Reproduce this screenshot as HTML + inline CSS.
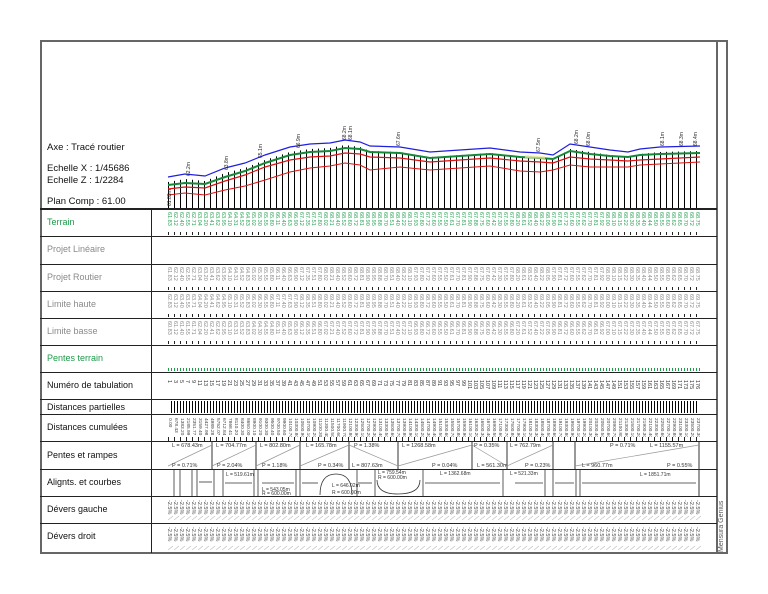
<!DOCTYPE html>
<html><head><meta charset="utf-8"><style>
*{margin:0;padding:0;box-sizing:border-box}
body{width:768px;height:594px;background:#fff;position:relative;overflow:hidden;font-family:"Liberation Sans",Arial,sans-serif}
.a{position:absolute}
.lb{position:absolute;left:47px;font-size:9px;color:#111;white-space:nowrap}
.g{color:#1e9a4a}.gr{color:#8a8a8a}
.h{position:absolute;left:47px;font-size:9.5px;color:#111;white-space:nowrap}
.v{position:absolute;writing-mode:vertical-lr;font-size:5.5px;line-height:6px;color:#8a8a8a;overflow:hidden;word-spacing:14px;letter-spacing:0}
.hl{position:absolute;left:40px;width:677px;height:1px;background:#222}
</style></head><body>
<div class="a" style="left:40px;top:40px;width:688px;height:514px;border:2px solid #666"></div>
<div class="a" style="left:716px;top:40px;width:2px;height:514px;background:#666"></div>
<div class="a" style="left:718px;top:490px;width:9px;height:62px;font-size:7px;color:#555;writing-mode:vertical-rl;transform:rotate(180deg);white-space:nowrap">Mensura Genius</div>

<div class="h" style="top:142px">Axe : Tracé routier</div>
<div class="h" style="top:163px">Echelle X : 1/45686</div>
<div class="h" style="top:175px">Echelle Z : 1/2284</div>
<div class="h" style="top:196px">Plan Comp : 61.00</div>

<div class="hl" style="top:208px;height:2px"></div>
<div class="hl" style="top:236px"></div>
<div class="hl" style="top:264px"></div>
<div class="hl" style="top:291px"></div>
<div class="hl" style="top:318px"></div>
<div class="hl" style="top:345px"></div>
<div class="hl" style="top:372px"></div>
<div class="hl" style="top:399px"></div>
<div class="hl" style="top:414px"></div>
<div class="hl" style="top:441px"></div>
<div class="hl" style="top:469px"></div>
<div class="hl" style="top:496px"></div>
<div class="hl" style="top:523px"></div>
<div class="a" style="left:151px;top:208px;width:1px;height:345px;background:#222"></div>

<div class="lb g" style="top:217px">Terrain</div>
<div class="lb gr" style="top:244px">Projet Linéaire</div>
<div class="lb gr" style="top:272px">Projet Routier</div>
<div class="lb gr" style="top:299px">Limite haute</div>
<div class="lb gr" style="top:326px">Limite basse</div>
<div class="lb g" style="top:353px">Pentes terrain</div>
<div class="lb" style="top:380px">Numéro de tabulation</div>
<div class="lb" style="top:402px">Distances partielles</div>
<div class="lb" style="top:422px">Distances cumulées</div>
<div class="lb" style="top:450px">Pentes et rampes</div>
<div class="lb" style="top:477px">Alignts. et courbes</div>
<div class="lb" style="top:504px">Dévers gauche</div>
<div class="lb" style="top:531px">Dévers droit</div>

<div class="v" style="left:166px;top:212px;width:536px;height:20px;color:#2aa356">61.83 62.12 62.40 62.55 62.71 63.04 63.20 63.41 63.62 63.95 64.10 64.31 64.52 64.83 65.02 65.30 65.55 65.80 66.11 66.40 66.63 66.90 67.12 67.35 67.51 67.80 68.02 68.21 68.40 68.52 68.60 68.72 68.81 68.90 68.95 68.88 68.70 68.51 68.40 68.22 68.10 67.93 67.80 67.72 67.60 67.55 67.50 67.61 67.70 67.81 67.90 67.88 67.75 67.60 67.42 67.30 67.55 67.80 68.20 68.61 68.52 68.40 68.22 68.05 67.90 67.81 67.72 67.60 67.55 67.62 67.70 67.81 67.92 68.00 68.10 68.15 68.22 68.30 68.35 68.40 68.44 68.50 68.55 68.60 68.62 68.65 68.70 68.72 68.75 68.80 68.81 68.85 68.90 68.92 68.95 68.97 69.00</div>
<div class="v" style="left:166px;top:267px;width:536px;height:20px">61.83 62.12 62.40 62.55 62.71 63.04 63.20 63.41 63.62 63.95 64.10 64.31 64.52 64.83 65.02 65.30 65.55 65.80 66.11 66.40 66.63 66.90 67.12 67.35 67.51 67.80 68.02 68.21 68.40 68.52 68.60 68.72 68.81 68.90 68.95 68.88 68.70 68.51 68.40 68.22 68.10 67.93 67.80 67.72 67.60 67.55 67.50 67.61 67.70 67.81 67.90 67.88 67.75 67.60 67.42 67.30 67.55 67.80 68.20 68.61 68.52 68.40 68.22 68.05 67.90 67.81 67.72 67.60 67.55 67.62 67.70 67.81 67.92 68.00 68.10 68.15 68.22 68.30 68.35 68.40 68.44 68.50 68.55 68.60 68.62 68.65 68.70 68.72 68.75 68.80 68.81 68.85 68.90 68.92 68.95 68.97 69.00</div>
<div class="v" style="left:166px;top:294px;width:536px;height:20px">62.83 63.12 63.40 63.55 63.71 64.04 64.20 64.41 64.62 64.95 65.10 65.31 65.52 65.83 66.02 66.30 66.55 66.80 67.11 67.40 67.63 67.90 68.12 68.35 68.51 68.80 69.02 69.21 69.40 69.52 69.60 69.72 69.81 69.90 69.95 69.88 69.70 69.51 69.40 69.22 69.10 68.93 68.80 68.72 68.60 68.55 68.50 68.61 68.70 68.81 68.90 68.88 68.75 68.60 68.42 68.30 68.55 68.80 69.20 69.61 69.52 69.40 69.22 69.05 68.90 68.81 68.72 68.60 68.55 68.62 68.70 68.81 68.92 69.00 69.10 69.15 69.22 69.30 69.35 69.40 69.44 69.50 69.55 69.60 69.62 69.65 69.70 69.72 69.75 69.80 69.81 69.85 69.90 69.92 69.95</div>
<div class="v" style="left:166px;top:321px;width:536px;height:20px">60.83 61.12 61.40 61.55 61.71 62.04 62.20 62.41 62.62 62.95 63.10 63.31 63.52 63.83 64.02 64.30 64.55 64.80 65.11 65.40 65.63 65.90 66.12 66.35 66.51 66.80 67.02 67.21 67.40 67.52 67.60 67.72 67.81 67.90 67.95 67.88 67.70 67.51 67.40 67.22 67.10 66.93 66.80 66.72 66.60 66.55 66.50 66.61 66.70 66.81 66.90 66.88 66.75 66.60 66.42 66.30 66.55 66.80 67.20 67.61 67.52 67.40 67.22 67.05 66.90 66.81 66.72 66.60 66.55 66.62 66.70 66.81 66.92 67.00 67.10 67.15 67.22 67.30 67.35 67.40 67.44 67.50 67.55 67.60 67.62 67.65 67.70 67.72 67.75 67.80 67.81 67.85 67.90 67.92 67.95</div>
<div class="v" style="left:166px;top:380px;width:536px;height:15px;color:#333;word-spacing:20px">1 3 5 7 9 11 13 15 17 19 21 23 25 27 29 31 33 35 37 39 41 43 45 47 49 51 53 55 57 59 61 63 65 67 69 71 73 75 77 79 81 83 85 87 89 91 93 95 97 99 101 103 105 107 109 111 113 115 117 119 121 123 125 127 129 131 133 135 137 139 141 143 145 147 149 151 153 155 157 159 161 163 165 167 169 171 173 175 176</div>
<div class="v" style="left:166px;top:418px;width:536px;height:19px;color:#444;font-size:4.8px;word-spacing:20px">0.00 678.43 1383.20 2185.99 2351.77 3159.40 4427.98 4989.28 5752.07 6712.84 7868.41 8110.20 8400.30 8650.00 8900.10 9100.20 9300.30 9500.40 9700.50 9900.60 10100.70 10300.80 10500.90 10700.10 10900.20 11100.30 11300.40 11500.50 11700.60 11900.70 12100.80 12300.90 12500.10 12700.20 12900.30 13100.40 13300.50 13500.60 13700.70 13900.80 14100.90 14300.10 14500.20 14700.30 14900.40 15100.50 15300.60 15500.70 15700.80 15900.90 16100.10 16300.20 16500.30 16700.40 16900.50 17100.60 17300.70 17500.80 17700.90 17900.10 18100.20 18300.30 18500.40 18700.50 18900.60 19100.70 19300.80 19500.90 19700.10 19900.20 20100.30 20300.40 20500.50 20700.60 20900.70 21100.80 21300.90 21500.10 21700.20 21900.30 22100.40 22300.50 22500.60 22700.70 22900.80 23100.90 23300.10 23500.20 23700.30 23900.40</div>
<div class="v" style="left:166px;top:500px;width:536px;height:20px;color:#444;font-size:5.5px;word-spacing:30px">-2.5% -2.5% -2.5% -2.5% -2.5% -2.5% -2.5% -2.5% -2.5% -2.5% -2.5% -2.5% -2.5% -2.5% -2.5% -2.5% -2.5% -2.5% -2.5% -2.5% -2.5% -2.5% -2.5% -2.5% -2.5% -2.5% -2.5% -2.5% -2.5% -2.5% -2.5% -2.5% -2.5% -2.5% -2.5% -2.5% -2.5% -2.5% -2.5% -2.5% -2.5% -2.5% -2.5% -2.5% -2.5% -2.5% -2.5% -2.5% -2.5% -2.5% -2.5% -2.5% -2.5% -2.5% -2.5% -2.5% -2.5% -2.5% -2.5% -2.5% -2.5% -2.5% -2.5% -2.5% -2.5% -2.5% -2.5% -2.5% -2.5% -2.5% -2.5% -2.5% -2.5% -2.5% -2.5% -2.5% -2.5% -2.5% -2.5% -2.5% -2.5% -2.5% -2.5% -2.5% -2.5% -2.5% -2.5% -2.5% -2.5%</div>
<div class="v" style="left:166px;top:527px;width:536px;height:20px;color:#444;font-size:5.5px;word-spacing:30px">-2.5% -2.5% -2.5% -2.5% -2.5% -2.5% -2.5% -2.5% -2.5% -2.5% -2.5% -2.5% -2.5% -2.5% -2.5% -2.5% -2.5% -2.5% -2.5% -2.5% -2.5% -2.5% -2.5% -2.5% -2.5% -2.5% -2.5% -2.5% -2.5% -2.5% -2.5% -2.5% -2.5% -2.5% -2.5% -2.5% -2.5% -2.5% -2.5% -2.5% -2.5% -2.5% -2.5% -2.5% -2.5% -2.5% -2.5% -2.5% -2.5% -2.5% -2.5% -2.5% -2.5% -2.5% -2.5% -2.5% -2.5% -2.5% -2.5% -2.5% -2.5% -2.5% -2.5% -2.5% -2.5% -2.5% -2.5% -2.5% -2.5% -2.5% -2.5% -2.5% -2.5% -2.5% -2.5% -2.5% -2.5% -2.5% -2.5% -2.5% -2.5% -2.5% -2.5% -2.5% -2.5% -2.5% -2.5% -2.5% -2.5%</div>

<svg class="a" style="left:0;top:0" width="768" height="594" viewBox="0 0 768 594">
<defs>
<pattern id="vl" x="168" y="0" width="6" height="10" patternUnits="userSpaceOnUse"><rect x="0" y="0" width="1" height="10" fill="#000"/></pattern>
<pattern id="dp" x="171" y="0" width="3" height="10" patternUnits="userSpaceOnUse"><rect x="0" y="0" width="1" height="10" fill="#000"/></pattern>
<pattern id="tk" x="168" y="0" width="6" height="10" patternUnits="userSpaceOnUse"><rect x="0" y="0" width="1" height="10" fill="#222"/></pattern>
<pattern id="tg" x="168" y="0" width="3" height="10" patternUnits="userSpaceOnUse"><rect x="0" y="0" width="1" height="10" fill="#1e9a4a"/></pattern>
<pattern id="ts" x="168" y="0" width="6" height="10" patternUnits="userSpaceOnUse"><line x1="0" y1="10" x2="5" y2="6" stroke="#bbb" stroke-width="0.6"/></pattern>
</defs>
<polygon fill="url(#vl)" points="168,182 185,179 205,181 225,173 245,168 265,160 290,152 310,149 330,148 345,145 360,147 370,151 400,152 430,157 460,155 490,153 520,157 540,158 553,160 570,149 590,152 610,155 628,157 640,154 660,152 701,151 701,208 168,208"/>
<polyline fill="none" stroke="#1f1fe0" stroke-width="1.2" points="168,177 185,174 205,176 225,168 245,163 265,155 290,147 310,144 330,143 345,140 360,142 370,146 400,147 430,152 460,150 490,148 520,152 540,153 553,155 570,144 590,147 610,150 628,152 640,149 660,147 700,146"/>
<polyline fill="none" stroke="#138a3a" stroke-width="2" points="168,185 185,183 205,184 225,177 245,171 265,163 290,155 310,152 330,151 345,148 360,149 370,152 400,153 430,158 460,156 490,154 520,157 540,158 553,159 570,151 590,154 610,156 628,157 640,155 660,154 700,153"/>
<polyline fill="none" stroke="#e01010" stroke-width="1.2" points="168,189 185,187 205,188 225,181 245,175 265,167 290,160 310,157 330,156 345,153 360,154 370,157 400,158 430,162 460,160 490,158 520,161 540,162 553,163 570,157 590,159 610,160 628,161 640,160 660,159 700,157"/>
<polyline fill="none" stroke="#e01010" stroke-width="1" points="168,195 185,193 205,195 225,190 245,186 265,180 290,172 310,168 330,166 345,163 360,165 370,170 400,167 430,170 460,168 490,166 520,171 540,172 553,170 570,165 590,167 610,167 628,167 640,165 660,164 700,162"/>
<polygon fill="#f3ea9a" opacity=".7" points="525,155 545,156 545,159 525,158"/>
<rect x="168" y="232" width="533" height="3" fill="url(#tk)"/>
<rect x="168" y="287" width="533" height="3" fill="url(#tk)"/>
<rect x="168" y="314" width="533" height="3" fill="url(#tk)"/>
<rect x="168" y="341" width="533" height="3" fill="url(#tk)"/>
<rect x="168" y="368" width="533" height="3" fill="url(#tg)"/>
<rect x="168" y="390" width="533" height="6" fill="url(#ts)"/>
<rect x="171" y="401" width="528" height="12" fill="url(#dp)"/>
<rect x="168" y="437" width="533" height="4" fill="url(#tk)"/>
<rect x="168" y="542" width="533" height="8" fill="url(#ts)"/>
<rect x="168" y="515" width="533" height="6" fill="url(#ts)"/>
<g stroke="#333" stroke-width="1">
<line x1="212" y1="441" x2="212" y2="469"/><line x1="256" y1="441" x2="256" y2="469"/>
<line x1="300" y1="441" x2="300" y2="469"/><line x1="349" y1="441" x2="349" y2="469"/>
<line x1="398" y1="441" x2="398" y2="469"/><line x1="472" y1="441" x2="472" y2="469"/>
<line x1="507" y1="441" x2="507" y2="469"/><line x1="553" y1="441" x2="553" y2="469"/>
<line x1="575" y1="441" x2="575" y2="469"/><line x1="699" y1="441" x2="699" y2="496"/>
</g>
<g stroke="#999" stroke-width=".7">
<line x1="168" y1="466" x2="212" y2="445"/><line x1="212" y1="466" x2="256" y2="445"/>
<line x1="256" y1="466" x2="300" y2="445"/><line x1="300" y1="466" x2="349" y2="445"/>
<line x1="349" y1="445" x2="398" y2="466"/><line x1="398" y1="466" x2="472" y2="445"/>
<line x1="472" y1="445" x2="507" y2="466"/><line x1="507" y1="466" x2="553" y2="445"/>
<line x1="575" y1="466" x2="699" y2="445"/>
</g>
<g font-size="5.5" fill="#333" font-family="Liberation Sans">
<text x="172" y="447">L = 678.43m</text><text x="216" y="447">L = 704.77m</text><text x="260" y="447">L = 802.80m</text>
<text x="306" y="447">L = 165.78m</text><text x="354" y="447">P = 1.38%</text><text x="402" y="447">L = 1268.58m</text>
<text x="474" y="447">P = 0.35%</text><text x="510" y="447">L = 762.79m</text><text x="610" y="447">P = 0.71%</text><text x="650" y="447">L = 1155.57m</text>
<text x="172" y="467">P = 0.71%</text><text x="217" y="467">P = 2.04%</text><text x="262" y="467">P = 1.18%</text>
<text x="318" y="467">P = 0.34%</text><text x="352" y="467">L = 807.63m</text><text x="432" y="467">P = 0.04%</text>
<text x="477" y="467">L = 561.30m</text><text x="525" y="467">P = 0.23%</text><text x="582" y="467">L = 960.77m</text><text x="667" y="467">P = 0.55%</text>
</g>
<g stroke="#333" stroke-width=".8" fill="none">
<line x1="174" y1="470" x2="174" y2="496"/><line x1="180" y1="470" x2="180" y2="496"/>
<line x1="192" y1="470" x2="192" y2="496"/><line x1="197" y1="470" x2="197" y2="496"/>
<line x1="214" y1="470" x2="214" y2="496"/><line x1="223" y1="470" x2="223" y2="496"/>
<line x1="254" y1="470" x2="254" y2="496"/><line x1="258" y1="470" x2="258" y2="496"/>
<line x1="296" y1="470" x2="296" y2="496"/><line x1="300" y1="470" x2="300" y2="496"/>
<line x1="357" y1="470" x2="357" y2="496"/><line x1="375" y1="470" x2="375" y2="496"/>
<line x1="423" y1="470" x2="423" y2="496"/><line x1="503" y1="470" x2="503" y2="496"/>
<line x1="545" y1="470" x2="545" y2="496"/><line x1="553" y1="470" x2="553" y2="496"/>
<line x1="576" y1="470" x2="576" y2="496"/><line x1="580" y1="470" x2="580" y2="496"/>
<line x1="199" y1="482" x2="212" y2="482"/><line x1="225" y1="483" x2="252" y2="483"/>
<line x1="262" y1="483" x2="294" y2="483"/><line x1="302" y1="483" x2="318" y2="483"/>
<line x1="358" y1="483" x2="372" y2="483"/><line x1="425" y1="483" x2="500" y2="483"/>
<line x1="515" y1="483" x2="543" y2="483"/><line x1="555" y1="483" x2="574" y2="483"/>
<line x1="582" y1="483" x2="696" y2="483"/>
<path d="M320,495 Q320,474 336,474 Q352,474 352,495"/><path d="M377,480 Q377,494 398,494 Q420,494 420,480"/>
</g>
<g font-size="5" fill="#333" font-family="Liberation Sans">
<text x="226" y="476">L = 519.61m</text><text x="262" y="491">L = 543.05m</text><text x="262" y="495">R = 600.00m</text>
<text x="332" y="487">L = 646.02m</text><text x="332" y="494">R = 600.00m</text>
<text x="378" y="474">L = 759.54m</text><text x="378" y="479">R = 600.00m</text>
<text x="440" y="475">L = 1362.68m</text><text x="510" y="475">L = 521.33m</text><text x="640" y="476">L = 1851.71m</text>
</g>
<g font-size="5" fill="#222" font-family="Liberation Sans">
<text transform="translate(171,206) rotate(-90)">61.83m</text>
<text transform="translate(190,176) rotate(-90)">62.2m</text>
<text transform="translate(228,170) rotate(-90)">63.8m</text>
<text transform="translate(262,158) rotate(-90)">65.1m</text>
<text transform="translate(300,148) rotate(-90)">66.9m</text>
<text transform="translate(346,140) rotate(-90)">68.2m</text>
<text transform="translate(352,140) rotate(-90)">68.1m</text>
<text transform="translate(400,146) rotate(-90)">67.6m</text>
<text transform="translate(540,152) rotate(-90)">67.5m</text>
<text transform="translate(578,144) rotate(-90)">68.2m</text>
<text transform="translate(590,146) rotate(-90)">68.0m</text>
<text transform="translate(664,146) rotate(-90)">68.1m</text>
<text transform="translate(683,146) rotate(-90)">68.3m</text>
<text transform="translate(697,146) rotate(-90)">68.4m</text>
</g>
</svg>
</body></html>
